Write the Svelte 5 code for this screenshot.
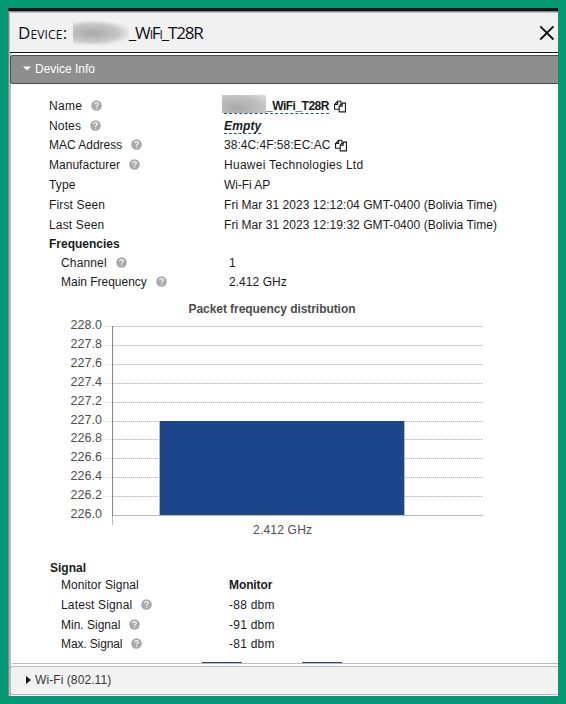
<script>
  const info = [
    { label: 'Name', help: true, value: '_WiFi_T28R', kind: 'name', copy: true, h: 20, ls: 0.3, vs: -0.5 },
    { label: 'Notes', help: true, value: 'Empty', kind: 'empty', h: 19 },
    { label: 'MAC Address', help: true, value: '38:4C:4F:58:EC:AC', copy: true, h: 20, ls: -0.02, vs: 0.02 },
    { label: 'Manufacturer', help: true, value: 'Huawei Technologies Ltd', h: 20, ls: 0.02, vs: 0.27 },
    { label: 'Type', value: 'Wi-Fi AP', h: 20, vs: -0.05 },
    { label: 'First Seen', value: 'Fri Mar 31 2023 12:12:04 GMT-0400 (Bolivia Time)', h: 20, vs: 0.045 },
    { label: 'Last Seen', value: 'Fri Mar 31 2023 12:19:32 GMT-0400 (Bolivia Time)', h: 20, vs: 0.045 }
  ];
  const frequencies = [
    { label: 'Channel', help: true, value: '1', h: 19 },
    { label: 'Main Frequency', help: true, value: '2.412 GHz', h: 20, ls: -0.02, vs: 0.05 }
  ];
  const signal = [
    { label: 'Monitor Signal', value: 'Monitor', kind: 'bold', h: 20, ls: 0.08, vs: -0.1 },
    { label: 'Latest Signal', help: true, value: '-88 dbm', h: 20, vs: 0.25 },
    { label: 'Min. Signal', help: true, value: '-91 dbm', h: 19, ls: 0, vs: 0.25 },
    { label: 'Max. Signal', help: true, value: '-81 dbm', h: 20, ls: -0.12, vs: 0.25 }
  ];
  const ticks = [
    ['228.0', 34], ['227.8', 53], ['227.6', 72], ['227.4', 91], ['227.2', 110], ['227.0', 129],
    ['226.8', 147], ['226.6', 166], ['226.4', 185], ['226.2', 204], ['226.0', 223]
  ];
</script>

{#snippet row(r)}
  <div class="row" style:height="{r.h}px">
    <div class="label">
      <span style:letter-spacing="{r.ls ?? 0.15}px">{r.label}</span>
      {#if r.help}
        <svg class="help" width="11" height="11" viewBox="0 0 11 11">
          <circle cx="5.5" cy="5.5" r="5.3" fill="#a9a9a9" />
          <path d="M3.6 4.2C3.8 2.1 7.4 2.1 7.3 4.2C7.2 5.4 5.6 5.3 5.6 6.6M5.6 7.5V8.8" fill="none" stroke="#f4f4f4" stroke-width="1.3" />
        </svg>
      {/if}
    </div>
    <div class="value {r.kind ?? ''}" style:letter-spacing="{r.vs ?? 0.15}px">
      {#if r.kind === 'name'}
        <span class="edit"><i class="mask"></i>{r.value}</span>
      {:else if r.kind === 'empty'}
        <span class="edit">{r.value}</span>
      {:else}
        <span>{r.value}</span>
      {/if}
      {#if r.copy}
        <svg class="copy" width="12" height="13" viewBox="0 0 13 13" fill="none" stroke="#1b1b1b" stroke-width="1.2">
          <path d="M5.5 9.5H.6V4.2L3.9.8H7.4V3M3.9.8V4.2H.6" />
          <path d="M5.6 6.2L8.9 2.8H12.4V12.3H5.6ZM8.9 2.8V6.2H5.6" />
        </svg>
      {/if}
    </div>
  </div>
{/snippet}

<main>
  <div class="window">
    <header>
      <h1>Device: <i class="smudge"></i><span class="tail">_WiFi_T28R</span></h1>
      <svg class="close" width="16" height="16" viewBox="0 0 16 16"><path d="M1.3 1.3L14.5 14.5M14.5 1.3L1.3 14.5" stroke="#141414" stroke-width="1.9" /></svg>
    </header>
    <div class="bar open">
      <svg width="8" height="5" viewBox="0 0 8 5"><path d="M0 .5H8L4 4.5Z" fill="#fff" /></svg>
      <span>Device Info</span>
    </div>
    <section>
      {#each info as r}{@render row(r)}{/each}
      <h2 class="freq">Frequencies</h2>
      <div class="nested">{#each frequencies as r}{@render row(r)}{/each}</div>
      <svg class="chart" width="547" height="266" viewBox="11 292 547 266">
        <text class="title" x="188.5" y="313" textLength="167">Packet frequency distribution</text>
        {#each ticks as [t, y]}
          <text class="tick" x="70.5" y={y + 295} textLength="31.5">{t}</text>
          {#if t !== '226.0'}
            <path d="M103 {y + 292.5}H483" stroke="#e8e8e8" />
            <path d="M113 {y + 292.5}H483" stroke="#b9b9b9" stroke-dasharray="1 1" />
          {/if}
        {/each}
        <path d="M113 515.5H483" stroke="#b9b9b9" />
        <path d="M112.5 326V516" stroke="#858585" />
        <path d="M112.5 516V525" stroke="#b9b9b9" />
        <rect x="159" y="421" width="246" height="94" fill="#b9b9b9" />
        <rect x="160" y="421" width="244" height="94" fill="#1b478a" />
        <text x="253" y="534" textLength="59">2.412 GHz</text>
      </svg>
      <h2 class="sig">Signal</h2>
      <div class="nested">{#each signal as r}{@render row(r)}{/each}</div>
      <div class="peek"><b></b><b></b></div>
    </section>
    <div class="bar closed">
      <svg width="5" height="8" viewBox="0 0 5 8"><path d="M0 0V8L5 4Z" fill="#141414" /></svg>
      <span>Wi-Fi (802.11)</span>
    </div>
  </div>
</main>

<style>
  :global(body) { margin: 0; }
  main {
    box-sizing: border-box; width: 566px; height: 704px; padding: 8px; background: #009973;
    font: 12px/18px "Liberation Sans", Arial, sans-serif; color: #1b1b1b; letter-spacing: 0.15px;
  }
  .window {
    box-sizing: border-box; height: 688px; background: #fff; display: flex; flex-direction: column;
    border-top: 3px solid #141418; box-shadow: inset 1px 0 #858585, inset 3px 0 #b9b9b9;
    overflow: hidden;
  }
  header {
    box-sizing: border-box; flex: none; height: 42px; margin-left: 2px; padding: 0 3px 0 8px; display: flex;
    align-items: center; justify-content: space-between; border-bottom: 1px solid #141414; background: #f1f1f1;
    box-shadow: inset 0 1px #858585, inset 0 2px #c4c4c4;
  }
  h1 {
    margin: 0; display: flex; align-items: center; white-space: pre; font: 17px/24px "Open Sans", sans-serif;
    font-variant: small-caps; letter-spacing: 0.15px; padding-top: 3px; color: #101018;
  }
  .smudge {
    width: 56px; height: 26px; margin-left: 1px;
    background: radial-gradient(ellipse 72% 50% at 35% 50%, #acacac 10%, #c6c6c6 65%, #f1f1f100 100%);
  }
  .tail { letter-spacing: -1.15px; }
  .close { margin-top: 3px; }
  .bar {
    box-sizing: border-box; flex: none; height: 29px; margin-left: 2px; padding: 0 0 2px 12px; display: flex;
    align-items: center; gap: 4px; border: 1px solid #4d4d4d; border-right: 0; border-radius: 3px 0 0 3px;
    letter-spacing: 0;
  }
  .open { margin-top: 2px; color: #fff; background: #8e8e8e; }
  .bar.closed { margin-top: 2px; padding-left: 15px; gap: 4px; color: #36383c; background: #f2f2f2; border-color: #b9b9b9; letter-spacing: 0.08px; }
  section {
    box-sizing: border-box; flex: none; height: 580px; margin-left: 3px; padding-top: 12px; position: relative;
    border-bottom: 1px solid #b9b9b9; border-bottom-left-radius: 3px;
  }
  .row { display: flex; align-items: center; padding-left: 38px; white-space: nowrap; }
  .label { width: 175px; display: flex; align-items: center; gap: 9px; }
  .value { display: flex; align-items: center; gap: 5px; }
  .nested .row { padding-left: 50px; }
  .nested .label { width: 168px; }
  .help { flex: none; margin-top: -1px; }
  .edit { display: flex; font-weight: bold; line-height: 14px; border-bottom: 1px dashed #2a5688; }
  .empty .edit { font-style: italic; margin-top: 1px; }
  .mask {
    width: 44px; height: 18px; margin: -4px 0 0 -2px;
    background: radial-gradient(ellipse at 35% 75%, #a9a9a9, #c0c0c0 60%, #dedede);
  }
  .bold { font-weight: bold; }
  h2 { margin: 0; padding-left: 38px; font-size: 12px; font-weight: bold; letter-spacing: 0; }
  .freq { height: 18px; line-height: 19px; }
  .sig { height: 17px; line-height: 20px; padding-left: 39px; }
  .chart { display: block; letter-spacing: 0; }
  .chart text { font-size: 12px; fill: #4d4d4d; }
  .chart .tick { font-size: 12.5px; }
  .chart .title { font-weight: bold; }
  .peek { position: absolute; left: 191px; bottom: 0; display: flex; gap: 60px; }
  .peek b { width: 40px; height: 1px; background: #1b478a; }
</style>
